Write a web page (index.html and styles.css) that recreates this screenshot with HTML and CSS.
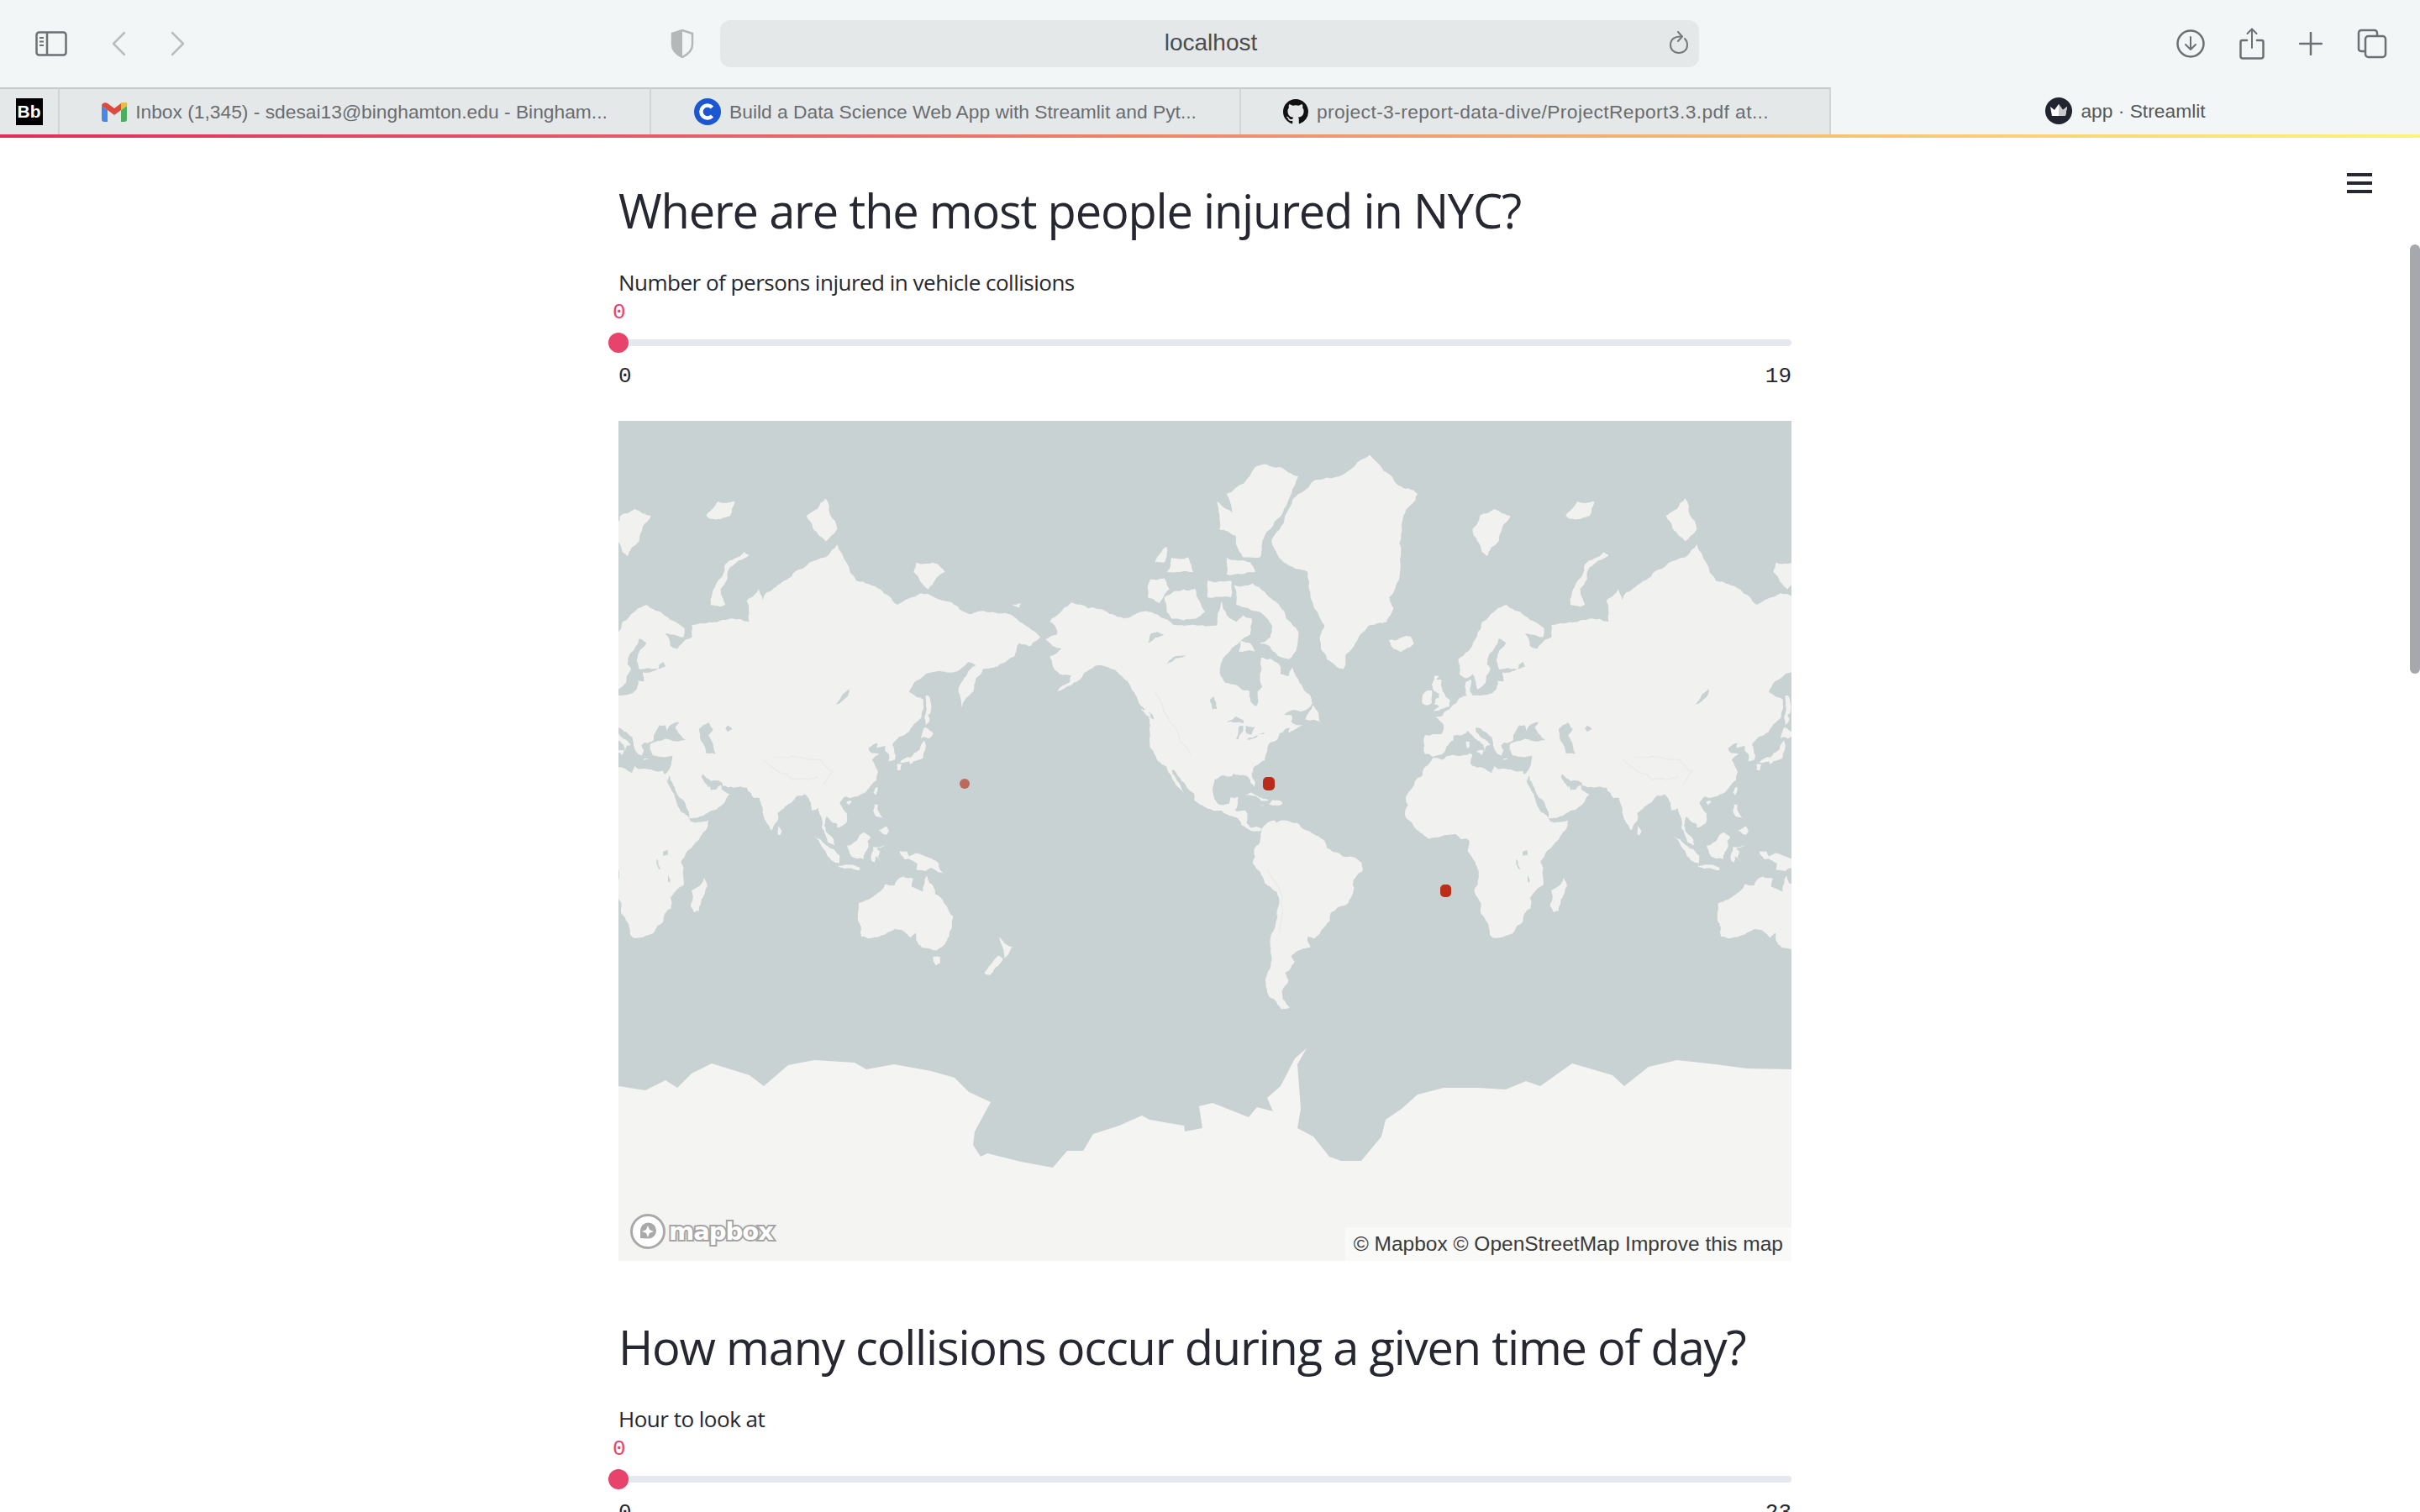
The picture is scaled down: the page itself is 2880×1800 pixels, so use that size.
FILE: index.html
```html
<!DOCTYPE html>
<html lang="en">
<head>
  <meta charset="UTF-8">
  <title>app · Streamlit</title>
  <link rel="stylesheet" href="styles.css">
</head>
<body>
  <header class="toolbar">
    <div class="nav-left">
      <svg class="icon-sidebar" width="38" height="30" viewBox="0 0 38 30" fill="none" stroke="#6c7073" stroke-width="2.5">
        <rect x="1.5" y="1.5" width="35" height="27" rx="3"/>
        <path d="M14 1.5v27"/>
        <path d="M5 8h5M5 12.500h5M5 17h5" stroke-width="2"/>
      </svg>
      <svg class="icon-back" width="18" height="30" viewBox="0 0 18 30" fill="none" stroke="#b9bdbf" stroke-width="2.5" stroke-linecap="round" stroke-linejoin="round"><path d="M16 2 3 15l13 13"/></svg>
      <svg class="icon-forward" width="18" height="30" viewBox="0 0 18 30" fill="none" stroke="#b9bdbf" stroke-width="2.5" stroke-linecap="round" stroke-linejoin="round"><path d="m2 2 13 13L2 28"/></svg>
    </div>
    <svg class="icon-shield" width="28" height="34" viewBox="0 0 28 34">
      <path d="M14 1 2 5v13c0 7 6 12 12 15 6-3 12-8 12-15V5z" fill="none" stroke="#b4b8b9" stroke-width="2.500"/>
      <path d="M14 1 2 5v13c0 7 6 12 12 15z" fill="#b4b8b9"/>
    </svg>
    <div class="address">
      <span class="address-text">localhost</span>
      <svg class="icon-reload" width="24" height="28" viewBox="0 0 24 28" fill="none" stroke="#75797b" stroke-width="2" stroke-linecap="round"><path d="M14.500 6.500C7 6 2 10 2 16.500 2 22 6 26 12 26s10-4 10-9.500c0-3-1-5.500-3-7.500"/><path d="m11 1 5 5.500L11 12"/></svg>
    </div>
    <div class="nav-right">
      <svg width="34" height="34" viewBox="0 0 34 34" fill="none" stroke="#6c7073" stroke-width="2.500" stroke-linecap="round" stroke-linejoin="round"><circle cx="17" cy="17" r="15.500"/><path d="M17 9v15M11 18l6 6 6-6" stroke-width="2"/></svg>
      <svg width="30" height="38" viewBox="0 0 30 38" fill="none" stroke="#6c7073" stroke-width="2.500" stroke-linecap="round" stroke-linejoin="round"><path d="M9 15H3.500a2 2 0 0 0-2 2v17a2.500 2.500 0 0 0 2.500 2.500h22a2.500 2.500 0 0 0 2.500-2.500V17a2 2 0 0 0-2-2H21"/><path d="M15 24V2M9.500 7 15 1.500 20.500 7" stroke-width="2"/></svg>
      <svg width="28" height="28" viewBox="0 0 28 28" stroke="#6c7073" stroke-width="2.500" stroke-linecap="round"><path d="M14 1v26M1 14h26"/></svg>
      <svg width="36" height="36" viewBox="0 0 36 36" fill="none" stroke="#6c7073" stroke-width="2.500"><path d="M9 27H5a3 3 0 0 1-3-3V5a3 3 0 0 1 3-3h16a3 3 0 0 1 3 3v4"/><rect x="10" y="9" width="24" height="25" rx="3.500"/></svg>
    </div>
  </header>

  <nav class="tabs">
    <div class="tab tab-pinned"><span class="fav-bb">Bb</span></div>
    <div class="tab tab-first">
      <svg width="30" height="23" viewBox="0 0 30 23">
        <path d="M0 4v16a3 3 0 0 0 3 3h4V9z" fill="#4a86e8"/>
        <path d="M23 9v14h4a3 3 0 0 0 3-3V4z" fill="#4caf60"/>
        <path d="M23 1v8l7-5a3.500 3.500 0 0 0-7-3z" fill="#f4b93c"/>
        <path d="M0 4c0-3 4-5 7-3l8 6 8-6v8l-8 6-8-6z" fill="#dd4a3c"/>
      </svg>
      <span class="tab-title">Inbox (1,345) - sdesai13@binghamton.edu - Bingham...</span>
    </div>
    <div class="tab">
      <svg width="32" height="32" viewBox="0 0 32 32" fill="none"><circle cx="16" cy="16" r="16" fill="#1c57d2"/><path d="M21.500 11a7.500 7.500 0 1 0 0 10" stroke="#fff" stroke-width="4.500"/></svg>
      <span class="tab-title">Build a Data Science Web App with Streamlit and Pyt...</span>
    </div>
    <div class="tab tab-github">
      <svg width="30" height="30" viewBox="0 0 16 16" fill="#111"><path d="M8 0C3.580 0 0 3.580 0 8c0 3.540 2.290 6.530 5.470 7.590.4.070.55-.17.55-.38 0-.19-.01-.82-.01-1.490-2.010.37-2.530-.49-2.690-.94-.09-.23-.48-.94-.82-1.130-.28-.15-.68-.52-.01-.53.63-.01 1.080.58 1.230.82.72 1.210 1.870.87 2.330.66.07-.52.28-.87.51-1.070-1.780-.2-3.640-.89-3.640-3.950 0-.87.31-1.590.82-2.150-.08-.2-.36-1.020.08-2.120 0 0 .67-.21 2.200.82.64-.18 1.320-.27 2-.27.68 0 1.360.09 2 .27 1.530-1.040 2.200-.82 2.200-.82.44 1.100.16 1.920.08 2.120.51.56.82 1.270.82 2.150 0 3.070-1.870 3.750-3.650 3.950.29.25.54.73.54 1.480 0 1.070-.01 1.930-.01 2.200 0 .21.15.46.55.38A8.013 8.013 0 0 0 16 8c0-4.420-3.580-8-8-8z"/></svg>
      <span class="tab-title">project-3-report-data-dive/ProjectReport3.3.pdf at...</span>
    </div>
    <div class="tab tab-active">
      <svg width="32" height="32" viewBox="0 0 32 32"><circle cx="16" cy="16" r="16" fill="#22252f"/><path d="m6 11 5 4 5-7 5 7 5-4-2 11H8z" fill="#fff"/><path d="m16 8 5 7 5-4-2 11H16z" fill="#c9cacc"/></svg>
      <span class="tab-title">app · Streamlit</span>
    </div>
  </nav>
  <div class="decoration"></div>

  <main class="page">
    <div class="hamburger"><span></span><span></span><span></span></div>
    <div class="scroll-thumb"></div>

    <section class="block">
      <h2>Where are the most people injured in NYC?</h2>
      <div class="slider">
        <label>Number of persons injured in vehicle collisions</label>
        <div class="slider-value">0</div>
        <div class="track"><span class="thumb"></span></div>
        <div class="ticks"><span>0</span><span>19</span></div>
      </div>
      <div class="map">
        <svg id="world" width="1396" height="1000" viewBox="0 0 1396 1000">
          <rect width="1396" height="1000" fill="#c9d2d3"/>
          <g id="land-west" fill="#f1f2f0"></g>
          <g id="land-east" fill="#f1f2f0"></g>
          <polygon fill="#f4f4f2" points="0,792 32,797 56,785 70,794 87,777 111,765 156,779 173,792 202,767 233,761 281,764 295,772 328,766 372,774 400,782 417,799 443,811 424,846 422,862 431,876 439,872 479,882 517,889 534,869 553,869 565,849 596,839 623,827 632,832 673,839 674,846 695,842 691,816 707,812 750,829 760,817 779,822 772,806 788,792 805,759 819,747 808,766 812,819 808,842 827,852 846,876 860,881 884,881 908,852 913,832 932,819 951,802 982,794 1023,794 1056,796 1080,786 1097,792 1135,765 1183,779 1197,792 1226,769 1260,761 1305,766 1343,771 1396,772 1396,1000 0,1000"/>
          <circle cx="412" cy="432" r="6" fill="#bd6a5e"/>
          <rect x="767" y="424" width="14" height="16" rx="5" fill="#b92c17"/>
          <rect x="978" y="552" width="13" height="15" rx="5" fill="#bb2e17"/>
        </svg>
        <div class="mapbox-logo">
          <svg width="42" height="42" viewBox="0 0 42 42"><circle cx="21" cy="21" r="19.500" fill="#fff" stroke="#a9a9a9" stroke-width="3"/><path d="M12 29V20a9.500 9.500 0 1 1 9.500 9.500z" fill="#a9a9a9"/><path d="m21 14 2 5 5 2-5 2-2 5-2-5-5-2 5-2z" fill="#fff"/></svg>
          <span>mapbox</span>
        </div>
        <div class="attribution">© Mapbox © OpenStreetMap Improve this map</div>
      </div>
    </section>

    <section class="block block-second">
      <h2>How many collisions occur during a given time of day?</h2>
      <div class="slider">
        <label>Hour to look at</label>
        <div class="slider-value">0</div>
        <div class="track"><span class="thumb"></span></div>
        <div class="ticks"><span>0</span><span>23</span></div>
      </div>
    </section>
  </main>

  <script src="map.js"></script>
</body>
</html>
```

FILE: styles.css
```css
html, body {
  margin: 0;
  height: 1800px;
  overflow: hidden;
  background: #fff;
  font-family: "Liberation Sans", Arial, sans-serif;
}

/* browser chrome */
.toolbar {
  height: 104px;
  background: #f3f6f7;
  display: flex;
  align-items: center;
  position: relative;
  box-sizing: border-box;
}
.nav-left {
  display: flex;
  align-items: center;
  width: 798px;
  padding-left: 42px;
  box-sizing: border-box;
}
.icon-sidebar { margin-right: 52px; }
.icon-back { margin-right: 53px; }
.icon-shield { margin-right: 31px; }
.address {
  width: 1165px;
  height: 56px;
  background: #e5e8e9;
  border-radius: 12px;
  display: flex;
  align-items: center;
  justify-content: center;
  position: relative;
  font-size: 28px;
  color: #4a4d4f;
}
.address-text { margin: 0 0 2px 3px; }
.icon-reload {
  position: absolute;
  right: 12px;
  top: 13px;
}
.nav-right {
  display: flex;
  align-items: center;
  gap: 41px;
  margin-left: 568px;
}

.tabs {
  height: 56px;
  display: flex;
  background: #f3f6f7;
}
.tab {
  width: 702px;
  box-sizing: border-box;
  background: #e5e8e9;
  border-top: 2px solid #c6c9ca;
  border-right: 2px solid #d2d5d6;
  display: flex;
  align-items: center;
  justify-content: center;
  gap: 10px;
  color: #6a6d6f;
  font-size: 22.8px;
  white-space: nowrap;
}
.tab-pinned { width: 71px; }
.tab-first { width: 704px; }
.tab-github {
  letter-spacing: 0.4px;
  padding-right: 22px;
}
.tab-active {
  flex: 1;
  background: #f3f6f7;
  border: none;
  color: #55585a;
}
.fav-bb {
  width: 32px;
  height: 32px;
  background: #000;
  color: #fff;
  font-weight: 700;
  font-size: 21px;
  display: flex;
  align-items: center;
  justify-content: center;
}
.decoration {
  height: 4px;
  background: linear-gradient(90deg, #dc2f5c, #e9696c 35%, #f3a76f 62%, #fdf47a);
}

/* streamlit page */
.page {
  position: relative;
  height: 1636px;
  overflow: hidden;
  color: #262730;
}
.hamburger {
  position: absolute;
  left: 2793px;
  top: 42px;
  width: 30px;
  display: flex;
  flex-direction: column;
  gap: 6px;
}
.hamburger span {
  height: 4px;
  background: #262730;
}
.scroll-thumb {
  position: absolute;
  right: 0;
  top: 127px;
  width: 12px;
  height: 511px;
  border-radius: 6px;
  background: #a6a8ab;
}
.block {
  width: 1396px;
  margin-left: 736px;
  padding-top: 46px;
}
.block-second { padding-top: 62px; }
h2 {
  margin: 0;
  font-family: "Open Sans", sans-serif;
  font-weight: 400;
  font-size: 56px;
  letter-spacing: -1.2px;
  line-height: 80px;
  color: #262730;
  white-space: nowrap;
}
.slider { margin-top: 28px; }
.slider label {
  display: block;
  font-family: "Open Sans", sans-serif;
  font-size: 26px;
  letter-spacing: -0.5px;
  line-height: 36px;
}
.slider-value {
  font-family: "Liberation Mono", monospace;
  font-size: 26px;
  line-height: 30px;
  color: #e8446b;
  margin-left: -7px;
  margin-top: 3px;
}
.track {
  height: 8px;
  margin-top: 17px;
  background: #e6e8ef;
  border-radius: 4px;
  position: relative;
}
.thumb {
  position: absolute;
  left: -12px;
  top: -8px;
  width: 24px;
  height: 24px;
  border-radius: 50%;
  background: #e8446b;
}
.ticks {
  display: flex;
  justify-content: space-between;
  margin-top: 21px;
  font-family: "Liberation Mono", monospace;
  font-size: 26px;
  line-height: 30px;
}
.map {
  margin-top: 38px;
  height: 1000px;
  position: relative;
  overflow: hidden;
}
.map svg { display: block; }
.mapbox-logo {
  position: absolute;
  left: 14px;
  bottom: 14px;
  display: flex;
  align-items: center;
  gap: 4px;
}
.mapbox-logo span {
  font-family: "DejaVu Sans", sans-serif;
  font-weight: 700;
  font-size: 29px;
  letter-spacing: -1px;
  color: #fff;
  -webkit-text-stroke: 4px #a4a4a4;
  paint-order: stroke fill;
}
.attribution {
  position: absolute;
  right: 0;
  bottom: 0;
  height: 40px;
  line-height: 40px;
  padding: 0 10px;
  background: #f9f9f8;
  font-size: 24.5px;
  color: #3a3a3a;
  white-space: nowrap;
}
```

FILE: map.js
```js
// coastlines as [lon, lat], projected to web mercator for the map panel
const land = [
  // north america
  [-163,55,-158,57,-157,58.7,-162,59,-165,61,-166,62.5,-161,64,-165,64.5,-168,65.6,-163,66.5,-164,68,-166,68.5,-163,69.5,-157,71.3,-150,70.5,-141,69.7,-135,69,-128,70,-124,70,-118,69,-114,68,-108,68,-102,68,-96,68,-94,71.5,-92,69.5,-88,68.5,-85,69.5,-81.5,69,-82,66.5,-87,65,-90,64,-94,61.5,-94.8,59,-92.5,57,-88,56.5,-85,55.3,-82.3,55,-82,52.5,-79.5,51.3,-79,52,-79,55,-77,56,-78,59,-77.5,62.3,-73,62,-70,61,-69.5,59,-66,58.5,-64.5,60.3,-61.5,57,-57,54,-56,52,-60,50,-65,50.2,-68,49,-65,49,-64.5,48,-65,47,-62,46,-60,46,-64,44.5,-66,43.7,-65.5,45.3,-67,45,-70,43.6,-70.5,42,-74,40.6,-75.5,37,-76,35,-78,34,-81,32,-81.5,30,-80,26.8,-80.5,25.2,-82,27,-83,29,-85,29.7,-89,30.2,-90,29.2,-94,29.5,-97,28,-97.8,25,-97.5,22,-96,19,-94,18.2,-91,18.7,-90.5,21,-87,21.5,-87.5,18,-88.5,16,-84,15.9,-83.3,14.8,-83.7,11,-82,9,-79.5,9.5,-77.3,8.5,-78,7.5,-80,7.5,-83,8.3,-85.7,10,-87.5,13,-91,14,-94,16,-97,15.8,-102,18,-105.5,20,-105.5,22.5,-109,25.8,-112.5,29.5,-114.7,31.7,-114.5,30,-111,25,-109.5,23,-112,25,-115,29,-117,32.5,-120.5,34.5,-122.5,37.5,-124.2,40.3,-124,46,-124.7,48.4,-122.5,47.5,-123,49,-127,51,-130,54,-133,57,-137,59,-140,60,-146,60.8,-149,60,-152,59,-153,58,-157,56.5],
  // arctic canada
  [-62,66,-64,63,-66,62,-71,63,-74,64.5,-78,65,-73.5,66,-73,68,-78,70,-88,71,-89,73.5,-81,73.7,-76,72.7,-70,71,-67,69,-62,67],
  [-105,69,-115,69,-117,70,-118,72,-110,73,-105,73,-101,70],
  [-125,72,-120,71.2,-116,73,-118,74.3,-124,74.2],
  [-62,82.5,-70,83,-80,83,-92,81.5,-88,78,-85,76.5,-78,76.5,-76,78.5,-68,80.5],
  [-80,75,-92,74.7,-92,76.5,-82,76],
  [-88,80,-96,81,-95,79,-88,78.5],
  [-106,75,-117,75,-115,76.5,-108,76.5],
  [-90,72,-100,72,-100,74,-90,74],
  [-118,76,-122,76,-117,77.5],
  [-80,63.5,-87,63.5,-86,65.5,-82,65],
  [-53,47,-59,47.7,-56,51.5,-53.5,49.5],
  [-128,50.7,-125,50,-123.5,48.4,-125.5,48.8],
  // greenland, iceland, uk
  [-73,78.2,-68,76,-58,75,-54,70,-51,68,-53,66,-50,62,-46,60.5,-43,60,-42,63,-37,65.7,-32,68,-25,68.5,-22,70.5,-24,72,-20,74,-19,77,-18,80,-12,81.5,-20,82,-32,83.6,-45,82.5,-55,82.3,-62,81.5,-66,80.5,-72,78.5],
  [-24,65.5,-22,64,-19,63.4,-15,64.3,-13.5,65,-15,66.2,-18,66.1,-21,65.5],
  [-5.5,50,-1,50.7,1.3,51.2,1.7,52.7,0,53.5,-1.5,55,-2,56,-2,57.7,-4,57.7,-3,58.6,-5,58.6,-6,56.5,-5,55,-3,54.5,-3,53.4,-4.5,53.2,-5,51.8,-3,51.3],
  [-6,52.2,-6,54,-6,55.2,-8,55.2,-10,54,-10,52,-8,51.5],
  // eurasia
  [-9,37,-9.5,39,-9,43,-2,43.4,-1,46,-4.5,48.4,-1.5,48.7,-1,49.5,2,51,4,52,6,53.5,8.5,54,8,57,10.5,57.7,10,55,11,54,14,54,19,54.5,21,55.5,21.5,57.5,24,57.3,23.5,59.3,28,59.6,30,60,25,60.2,22,60,21.5,61,21.5,63,25,65,22,65.8,18,63,17,61,18.5,60,16.5,57,14.5,56,13,55.5,12.5,56.5,11,59,8,58,5.5,59,5,62,10,64,13,66.5,15,68.5,20,70,25,71,31,70,33,69.4,41,67.5,40.5,66,35,66.5,33,66.7,35,64.5,38,64,40,65,44,66,44,68,54,68.5,60,69,68,68.5,67,71.5,72,73,74,68,73,71.5,75,72.5,80,73.5,87,75,100,76.5,105,77.7,113,74,123,73,130,71,140,72.5,150,71.5,160,69.7,170,70,180,69,190,66,186,64.5,181,65,179,62.5,172,60.5,166,60,163,58,162,55,157,51,155.8,56,158,58,163,60.8,160,61.5,155,59.5,150,59.5,142,59,135,54.8,141,53,140,48,135,44,130.7,42.5,128,40,129.5,36.5,129,35,126.5,34.5,126.5,37,125,38,125,39.7,121.5,39,122,40.5,118,39,119,37.5,122.5,37,119.5,35,122,31,121.5,28,118,24.5,114,22,110,21,108,21.5,106,19,109,15,109,11.5,105,9,105,10.5,103,11,100.5,13.5,99.5,10,100.5,7,103.5,4,104,1.5,101,3,100,6,98.5,9,98,14,97,17,94.5,16,94,19,91.5,22.5,88,21.7,86.5,20,82,16.5,80,15,80,12,78,8.5,77,8,74,14,73,19,72.5,21,70,21,69,22.5,67,25,61.5,25,57,25.7,56.5,27,52,27.5,48.5,30,48,29,50,26.5,51,25,51.5,25.8,52,24,54,24.2,56.3,26,56.5,24.5,59.8,22.5,57.5,19,55,17,52,16,45,13,43,12.8,42.5,16,39,21,37,25,35,28,34.8,29.5,34,27.8,33,28,32.7,30,34.3,31.3,35.5,33.5,36,36.5,32,36,28,36.5,26.5,38.5,26.5,40,29,41,33,42,36,41.3,41.5,41.5,38,44.5,37,45.3,39,47,35,46,33.7,44.4,33,46,30.5,46,28,43,28,41.5,26,40.7,24,40.7,23,40,24,38,23,36.5,21.5,37,19.5,41,19,42.5,14.5,45,12.3,45.3,12.5,44,16,41.8,18.5,40,17,39.8,16,38,15.5,40,12,42,9,44.3,6,43,3,43,3,41.5,0,39.5,-0.5,38,-2,36.8,-5.5,36,-7,37],
  // africa, madagascar
  [-5.5,35.8,-2,35,3,36.8,10,37.3,11,36.8,10,34,11,33,15,32.3,19,30.3,20,32.8,25,31.8,29,31,32,31.2,32.5,30,33.5,28,35.5,24,37,21,38,18,39.5,15.5,43,12.5,43.5,11.5,51,12,50.5,9,47,4,42,-1,39.5,-5,40.5,-11,40.5,-15,35,-20,35.5,-24,32.7,-26,32,-29,28,-33,25,-34,20,-34.8,18.4,-34,17,-29,15,-26.5,14.5,-22,11.8,-17,13.5,-12,13,-8,12,-5,9,-1,9.7,3.5,8.5,4.5,6,4.3,4,6.3,1,6,-3,5,-7.5,4.4,-11,7,-13.5,9.5,-16.8,13,-17.3,14.7,-16,18,-17,21,-15,24,-13,27.5,-10,29.5,-9.5,32,-6.5,34.5],
  [49.3,-12,50.5,-15.5,49,-19,47,-25,45,-25.5,43.5,-23,44.5,-20,44,-17,47,-15.3],
  // south america
  [-77.3,8.5,-75,11,-72,12,-71,11,-68,12,-62,10.7,-60,8.3,-55,6,-51.5,4,-50,0.5,-44,-2.5,-40,-3,-35.5,-5.5,-35,-9,-39,-13,-39,-18,-41,-22,-45,-23.5,-48.5,-26,-48.7,-28.5,-53,-33.5,-55,-35,-58,-34.2,-57,-38,-62,-39,-65,-41,-63.5,-42.5,-65.5,-45,-67.5,-46,-66,-48,-69,-51,-68.5,-53,-65.5,-55,-69,-55.5,-74,-52.5,-75.5,-49,-73,-42,-73.7,-37,-71.5,-30,-70,-20,-71,-17.5,-76,-14,-81,-6,-80,-3,-80.5,0,-78,3,-77.5,7],
  // oceania
  [114,-22,113.5,-26,115,-31,115,-34.3,118,-35,123.5,-33.9,129,-31.7,132,-32,135.5,-34.7,138,-33,138,-35.5,140.5,-38,144,-38.5,146.5,-39,150,-37,153,-31,153.5,-27,151,-23.5,148.5,-20,146,-18.5,145,-15,143.5,-14,142.5,-10.8,141.5,-14,140.8,-17.5,136,-15.5,136.8,-12.2,132.5,-11.3,130,-13,129,-15,125,-14.5,122,-18,119,-20],
  [145,-41,148,-41,148,-43,146,-43.6],
  [172.7,-40.6,174.3,-41.7,171,-44.5,169,-46.6,166.5,-46,168.5,-44],
  [173,-34.5,175,-36.7,178.5,-37.7,177,-39.5,175,-41.6,174.7,-39],
  [131,-1,134,-0.8,135,-3,138,-1.7,141,-2.6,145,-4.3,147.5,-6,147.5,-7.5,150.5,-10.5,147,-9.5,144,-7.7,142,-9.2,138,-8.3,138.5,-6,135,-4,133,-4,132,-2.8],
  [109,1.5,111,2,113,3.5,116,7,119,5,117.7,3.5,118,1,116.5,-1.5,116,-4,111,-3.2,110,-1.5],
  [95.3,5.6,98,4,103.5,0,106,-3,105.7,-5.8,104,-5.5,101,-3,98.5,1],
  [105.2,-6.8,108,-6.5,111,-6.5,114.5,-7.7,114.4,-8.7,110,-8,106,-7.5],
  [120,1,125,1.5,121.5,0.5,123,-1,122,-3,123,-5,121,-3,120.5,-5.5,119.5,-5,119,-3,120,-0.5],
  [120.5,18.5,122,18.5,122,16,124,13,121,13.7,120,16],
  [122,8,123.7,8.5,125.5,9.7,126.5,7.5,125.5,6,124,6.5],
  [121,25,122,25,121,22,120.1,23],
  [108.7,19.3,110.5,20,111,19.5,109.7,18.2],
  [80,9.7,81.8,7.5,81,6,80,6.2],
  // japan, sakhalin
  [130.9,34,133,35.5,136,36,137,37.3,139.5,38.5,140,40,141.3,41.5,142,39.5,141,37,140.8,35.6,139,35,137,34.6,135.5,33.5,135,34.6,132,34],
  [130,33.5,132,33.5,131.3,31.3,130,31.5],
  [140,42,141.5,45.4,145.3,43.5,143,42,141,42.5],
  [142,46,143.5,47,143,49,144,49.5,143,54,142,54,142.2,50],
  // russian arctic
  [52,71,56,70.7,58,71,56,73,60,75.5,68,76.7,66,77,58,75.8,54,73.5],
  [11,79,15,77,17,76.6,22,78,27,80,20,80.5,14,80],
  [50,80,55,81,62,81,60,80,52,79.8],
  [95,79,100,78,105,79,100,81.2,92,80],
  [137,75,143,73,150,75,145,76,138,76],
  [178,71,182,71.2,181,70.6],
  // caribbean, mediterranean
  [-85,22,-82,23.2,-77,20.8,-74.2,20.2,-77.7,19.9,-78,20.7,-82,22],
  [-74.4,18.5,-73,20,-69,19.7,-68.4,18.6,-71,18],
  [-78.3,18.3,-76.3,18.1,-77,17.8],
  [8.3,41,9.7,41,9.6,39.2,8.5,39],
  [12.5,38,15.6,38.2,15,36.7],
  [24,35.5,26,35.2,24,35]
];

const lakes = [
  [-92,46.8,-88,48.5,-85,47.5,-85,46.6,-88,46.8],
  [-88,42,-87,45.5,-85,46,-85,45,-86.5,43,-87,41.7],
  [-84,46,-80,45.5,-81.5,43.2,-83.5,43.5],
  [-83.3,41.7,-79,42.8,-79,43,-83,42.2],
  [-79.5,43.3,-76.3,44,-76.3,43.4],
  [-98,50.5,-96,50.5,-97.5,53.8,-99,53],
  [-117,61,-109,62.7,-112,62.7,-116,61.8],
  [-125,65,-118,66.5,-121,67,-124,66.5],
  [47,45,51,46.8,53,45,51,43,53,40,54,37,50,37.3,49,40,47.5,43],
  [59,46,61,45,59,44,58,45],
  [104,51.7,110,55.7,109.5,54,106,52],
  [30,60,33,60.5,32,61.5,30.5,61],
  [32,-1,34,-0.3,34,-2.5,32,-2.7],
  [29.2,-4,30,-5,31,-8.5,30,-8,29.3,-6],
  [34,-10,35,-13,34.5,-14,34,-12]
];

// faint relief lines on land
const ridges = [
  [74,35,80,31,86,28,92,28,97,29],
  [78,36,88,36,98,35,103,31,99,26],
  [-75,-8,-70,-16,-68.5,-25,-69.5,-33],
  [-122,55,-113,45,-107,37]
];

const WORLD_W = 1023;
const R = WORLD_W / (2 * Math.PI);
const SVG_NS = 'http://www.w3.org/2000/svg';

function project(ring, shift) {
  const pts = [];
  for (let i = 0; i < ring.length; i += 2) {
    const lat = ring[i + 1] * Math.PI / 180;
    pts.push([
      1042 + (ring[i] - 20) * WORLD_W / 360 + shift,
      510 - R * Math.log(Math.tan(Math.PI / 4 + lat / 2))
    ]);
  }
  return pts;
}

// break long straight edges up so the coast looks rough; seeded so both copies match
function roughen(pts, seed, open) {
  let s = seed * 7919 + 13;
  const rand = () => {
    s = (s * 16807) % 2147483647;
    return s / 2147483647 - 0.5;
  };
  let out = pts;
  for (let pass = 0; pass < 3; pass++) {
    const next = [];
    out.forEach((p, i) => {
      next.push(p);
      if (open && i === out.length - 1) return;
      const q = out[(i + 1) % out.length];
      const dx = q[0] - p[0];
      const dy = q[1] - p[1];
      const k = rand() * 0.22;
      next.push([(p[0] + q[0]) / 2 - dy * k, (p[1] + q[1]) / 2 + dx * k]);
    });
    out = next;
  }
  return out;
}

function toPath(pts) {
  return pts.map((p, i) => (i ? 'L' : 'M') + p[0].toFixed(1) + ' ' + p[1].toFixed(1)).join('');
}

function addPath(group, d, attrs) {
  const el = document.createElementNS(SVG_NS, 'path');
  el.setAttribute('d', d);
  Object.keys(attrs).forEach(k => el.setAttribute(k, attrs[k]));
  group.appendChild(el);
}

function draw(id, shift) {
  const group = document.getElementById(id);
  addPath(group, land.map((r, i) => toPath(roughen(project(r, shift), i + 1)) + 'Z').join(''), {});
  addPath(group, ridges.map((r, i) => toPath(roughen(project(r, shift), i + 90, true))).join(''), {
    fill: 'none', stroke: '#e9ebe9', 'stroke-width': 1.5
  });
  addPath(group, lakes.map((r, i) => toPath(roughen(project(r, shift), i + 60)) + 'Z').join(''), { fill: '#c9d2d3' });
}

draw('land-west', -WORLD_W);
draw('land-east', 0);
```
